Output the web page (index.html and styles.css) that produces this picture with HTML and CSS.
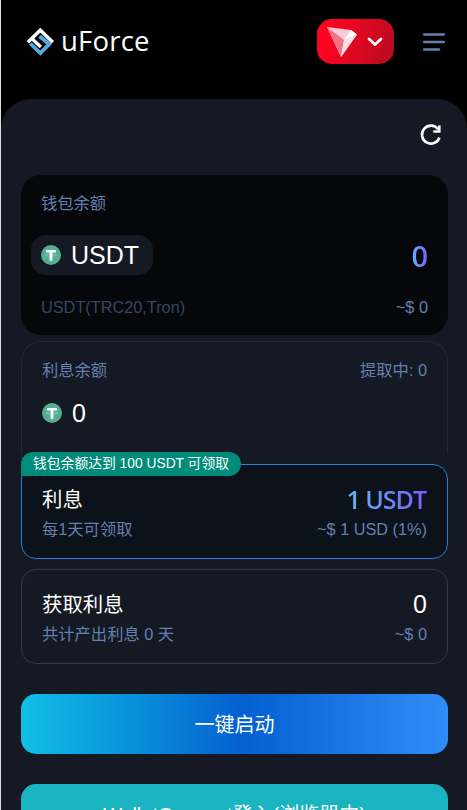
FILE: index.html
```html
<!DOCTYPE html>
<html lang="zh-CN">
<head>
<meta charset="utf-8">
<title>uForce</title>
<link rel="stylesheet" href="styles.css">
</head>
<body>
<svg width="0" height="0" class="defs">
  <symbol id="tether" viewBox="0 0 20 20">
    <circle cx="10" cy="10" r="10" fill="#53ae94"/>
    <path d="M5 5h10v2.4h-3.6V15.8H8.6V7.4H5z" fill="#fff"/>
    <ellipse cx="10" cy="10.2" rx="5.8" ry="1" fill="none" stroke="#fff" stroke-opacity=".5" stroke-width=".5"/>
  </symbol>
</svg>
<div class="app">
  <header class="topbar">
    <div class="brand">
      <svg class="mark" viewBox="0 0 34 34" fill="none" stroke-width="3.6">
        <path d="M6.3 18.5 16.3 28.2 25.3 19.2 15.5 11.2" stroke="#55a9e6" stroke-width="3.8"/>
        <path d="M3.8 17.3 16.3 5.2 28.8 17.3" stroke="#fff"/>
        <path d="M7.8 13.6 16.8 22" stroke="#fff" stroke-width="3.4"/>
      </svg>
      <span class="name">uForce</span>
    </div>
    <div class="actions">
      <button class="network">
        <svg width="32" height="32" viewBox="0 0 32 32">
          <path d="M1 1 25 4 31 8.5 15 31z" fill="#f8cdd5"/>
          <path d="M1 1 18 14 15 31z" fill="#f17484"/>
          <path d="M18 14 31 8.5 15 31z" fill="#fbdfe4"/>
          <path d="M25 4 31 8.5 18 14z" fill="#fff"/>
        </svg>
        <svg width="16" height="10" viewBox="0 0 16 10" fill="none" stroke="#fff" stroke-width="2.8" stroke-linecap="round" stroke-linejoin="round"><path d="M2 2l6 5.6L14 2"/></svg>
      </button>
      <svg class="menu" viewBox="0 0 22 18" fill="none" stroke="#6983b0" stroke-width="2.6" stroke-linecap="round"><path d="M1.2 1.5h19.6M1.2 9h19.6M1.2 16.5h14.8"/></svg>
    </div>
  </header>
  <main class="panel">
    <div class="tools">
      <button class="refresh"><svg width="22" height="22" viewBox="0 0 22 22" fill="none" stroke="#fff" stroke-width="2.6"><path d="M19.5 13.5A9 9 0 1 1 18.2 5.2M19.3 1.5v6h-6"/></svg></button>
    </div>
    <section class="wallet">
      <div class="label">钱包余额</div>
      <div class="row asset">
        <div class="chip"><svg class="coin"><use href="#tether"/></svg><span>USDT</span></div>
        <span class="grad total">0</span>
      </div>
      <div class="row note"><span class="dim">USDT(TRC20,Tron)</span><span>~$ 0</span></div>
    </section>
    <section class="interest">
      <div class="row note"><span>利息余额</span><span>提取中: 0</span></div>
      <div class="balance"><svg class="coin"><use href="#tether"/></svg><span>0</span></div>
    </section>
    <section class="box active">
      <div class="badge">钱包余额达到 100 USDT 可领取</div>
      <div class="row head"><span>利息</span><span class="grad amount">1 USDT</span></div>
      <div class="row note"><span>每1天可领取</span><span>~$ 1 USD (1%)</span></div>
    </section>
    <section class="box">
      <div class="row head"><span>获取利息</span><span class="num">0</span></div>
      <div class="row note"><span>共计产出利息 0 天</span><span>~$ 0</span></div>
    </section>
    <button class="cta start">一键启动</button>
    <button class="cta connect">WalletConnect登入(浏览器内)</button>
  </main>
</div>
</body>
</html>
```
FILE: styles.css
```css
* { box-sizing: border-box; }
html, body { margin: 0; height: 100%; overflow: hidden; background: #000; }
body, button { font-family: "Liberation Sans", "Noto Sans CJK SC", sans-serif; }
button { border: 0; padding: 0; color: #fff; }
svg { display: block; flex: none; }
.defs { position: absolute; }
.app { height: 810px; overflow: hidden; border-left: 1px solid #dcdfe5; background: #000; }

.topbar { height: 99px; padding: 19px 22px 0 23px; display: flex; justify-content: space-between; align-items: flex-start; }
.brand { height: 45px; display: flex; align-items: center; gap: 3px; }
.mark { width: 34px; height: 34px; }
.name { color: #fff; font: 27.5px/30px "Open Sans", "Noto Sans", sans-serif; letter-spacing: .2px; margin-top: -1px; }
.actions { display: flex; align-items: center; gap: 29px; }
.network { width: 77px; height: 45px; border-radius: 15px; background: linear-gradient(110deg, #ff0420 15%, #bd0b20 90%); display: flex; align-items: center; padding-left: 9px; gap: 9px; }
.menu { width: 22px; height: 18px; }

.panel { height: 900px; padding: 13px 19px 0 20px; border-radius: 30px 30px 0 0; background: #141923; }
.tools { height: 63px; margin-right: -5px; display: flex; justify-content: flex-end; align-items: flex-start; }
.refresh { width: 44px; height: 44px; border: 1px solid #121720; border-radius: 5px; background: none; display: grid; place-items: center; padding: 2px 0 0; }
.row { display: flex; justify-content: space-between; align-items: center; }
.note, .label { font-size: 16.3px; line-height: 23px; color: #6480b0; }
.label { height: 24px; }
.dim { color: #39465f; }
.coin { width: 20px; height: 20px; }
.grad { color: transparent; background: linear-gradient(90deg, #61b9f4, #7c5cff); -webkit-background-clip: text; background-clip: text; }

.wallet { height: 160px; border-radius: 20px; background: #05070b; padding: 17px 20px 0; margin-bottom: 6px; }
.asset { height: 40px; margin: 19px 0 21px -10px; }
.chip { width: 122px; height: 40px; border-radius: 15px; background: #141923; color: #fff; display: flex; align-items: center; padding-left: 10px; gap: 10px; font-size: 25px; }
.total { font: 600 29px/40px "Open Sans", "Noto Sans", sans-serif; padding-top: 2px; }

.interest { height: 113px; padding: 17px 20px 0; border: 1px solid #222837; border-bottom: 0; border-radius: 20px 20px 0 0; margin-bottom: 10px; }
.balance { height: 30px; margin-top: 16px; display: flex; align-items: center; gap: 10px; color: #fff; font-size: 25px; }

.box { position: relative; height: 95px; padding: 18px 20px 0; border: 1px solid #303a4e; border-radius: 15px; margin-bottom: 10px; }
.active { background: #0b1219; border-color: #2e7cd6; }
.head { height: 32px; margin-bottom: 3px; font-size: 20.4px; line-height: 30px; color: #fff; }
.head span:first-child { margin-top: 2px; }
.num { font-size: 25px; }
.amount { font: 600 25px/32px "Open Sans", "Noto Sans", sans-serif; letter-spacing: -1px; padding-right: 1px; }
.badge { position: absolute; left: -1px; top: -13px; height: 24px; width: 220px; padding-left: 12px; border-radius: 12px 12px 12px 0; background: #008b7b; color: #fff; font-size: 13.8px; line-height: 23px; white-space: nowrap; }

.cta { display: block; width: 100%; height: 60px; border-radius: 15px; font-size: 20px; padding-bottom: 2px; }
.start { margin: 30px 0; background: linear-gradient(90deg, #10bfe6, #0360d0 52%, #318cf8); }
.connect { background: #19b4c0; }
```
